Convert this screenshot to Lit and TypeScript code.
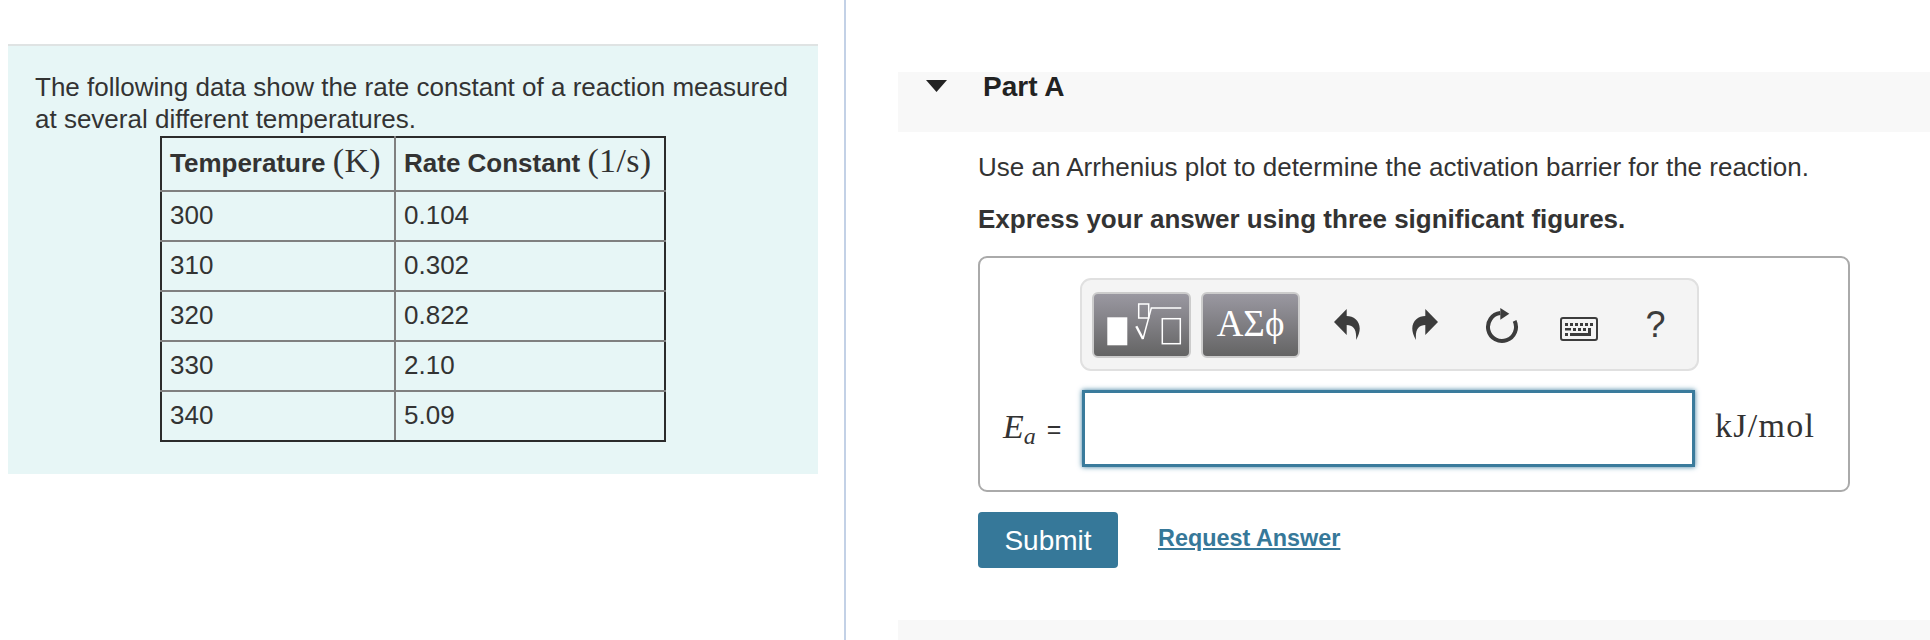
import { LitElement, css, html, svg } from "lit";
import { customElement } from "lit/decorators.js";

const rows = [
  ["300", "0.104"],
  ["310", "0.302"],
  ["320", "0.822"],
  ["330", "2.10"],
  ["340", "5.09"],
];

const keyCells = [
  [5, 6], [10, 6], [15, 6], [20, 6], [25, 6], [30, 6],
  [13, 11], [18, 11], [23, 11],
  [5, 16],
];

@customElement("app-root")
export class AppRoot extends LitElement {
  static styles = css`
    :host {
      display: flex;
      width: 1930px;
      height: 640px;
      overflow: hidden;
      background: #fff;
      color: #333;
      font-family: "Liberation Sans", Arial, sans-serif;
    }

    .left {
      width: 846px;
      flex: none;
      box-sizing: border-box;
      padding: 44px 0 0 8px;
      border-right: 2px solid #c3d1e6;
    }

    .panel {
      width: 810px;
      height: 430px;
      box-sizing: border-box;
      padding: 25px 27px 0;
      background: #e7f6f6;
      border-top: 2px solid #dfe3e3;
      font-size: 26px;
      line-height: 32px;
    }

    table {
      border-collapse: collapse;
      margin: 1px 0 0 125px;
      width: 506px;
      table-layout: fixed;
    }

    th,
    td {
      box-sizing: border-box;
      border: 2px solid #808080;
      padding: 0 0 2px 8px;
      text-align: left;
      height: 50px;
      line-height: 32px;
    }

    th {
      height: 54px;
      padding-bottom: 4px;
      white-space: nowrap;
      border-top-color: #2b2b2b;
    }

    th:first-child,
    td:first-child {
      width: 234px;
      border-left-color: #2b2b2b;
    }

    th:last-child,
    td:last-child {
      border-right-color: #2b2b2b;
    }

    tr:last-child td {
      border-bottom-color: #2b2b2b;
    }

    .math {
      font-family: "Liberation Serif", serif;
      font-weight: normal;
      font-size: 34px;
      letter-spacing: 0.3px;
    }

    .right {
      flex: 1;
      padding: 72px 0 0 52px;
      min-width: 0;
    }

    .part-bar {
      display: flex;
      height: 60px;
      box-sizing: border-box;
      padding-left: 28px;
      background: #f8f8f8;
      font-size: 28px;
      font-weight: bold;
      line-height: 30px;
      color: #222;
    }

    .caret {
      width: 21px;
      height: 12px;
      margin: 8px 36px 0 0;
      flex: none;
    }

    .content {
      margin-left: 80px;
      width: 872px;
    }

    p {
      margin: 0;
      font-size: 26px;
      line-height: 32px;
    }

    .intro {
      margin-top: 19px;
    }

    .hint {
      margin-top: 20px;
      font-weight: bold;
    }

    .box {
      margin-top: 21px;
      height: 236px;
      box-sizing: border-box;
      padding: 20px 0 0 100px;
      border: 2px solid #aaa;
      border-radius: 9px;
    }

    .toolbar {
      display: flex;
      align-items: center;
      width: 619px;
      height: 93px;
      box-sizing: border-box;
      padding: 0 0 0 10px;
      background: #f4f4f4;
      border: 2px solid #e0e0e0;
      border-radius: 11px;
    }

    .tool {
      width: 99px;
      height: 66px;
      flex: none;
      box-sizing: border-box;
      margin-right: 10px;
      padding-bottom: 2px;
      border: 2px solid #ccc;
      border-radius: 6px;
      background: linear-gradient(#9a98a1, #646464);
      display: flex;
      align-items: center;
      justify-content: center;
      color: #fff;
      font-family: "Liberation Serif", serif;
      font-size: 37px;
    }

    .tool svg {
      display: block;
      margin-bottom: -2px;
    }

    .slot {
      width: 77px;
      flex: none;
      display: flex;
      align-items: center;
      justify-content: center;
      color: #3c3c3c;
    }

    .tool + .slot {
      margin-left: -1px;
    }

    .keys {
      padding-top: 8px;
    }

    .help {
      font-size: 36px;
      line-height: 36px;
    }

    .answer {
      display: flex;
      align-items: center;
      margin: 19px 0 0 -100px;
      height: 77px;
    }

    .label {
      width: 102px;
      flex: none;
      box-sizing: border-box;
      padding: 0 0 4px 23px;
      font-family: "Liberation Serif", serif;
      white-space: nowrap;
      font-size: 34px;
    }

    .label i sub {
      font-size: 24px;
      line-height: 0;
      vertical-align: -6px;
    }

    .label .eq {
      font-family: "Liberation Sans", sans-serif;
      font-size: 25px;
      margin-left: 11px;
    }

    .input {
      width: 613px;
      height: 77px;
      flex: none;
      box-sizing: border-box;
      background: #fff;
      border: 3px solid #3a7b9c;
      box-shadow: 0 0 5px #3a7b9c;
    }

    .unit {
      margin-left: 20px;
      padding-bottom: 6px;
      font-family: "Liberation Serif", serif;
      font-size: 34px;
      letter-spacing: 1.3px;
    }

    .actions {
      display: flex;
      align-items: center;
      margin-top: 20px;
    }

    .submit {
      width: 140px;
      height: 56px;
      padding: 2px 0 0;
      border: none;
      border-radius: 4px;
      background: #367899;
      color: #fff;
      font: 28px "Liberation Sans", sans-serif;
    }

    .request {
      margin: 0 0 4px 40px;
      color: #367899;
      font-weight: bold;
      font-size: 23.4px;
      text-decoration: underline;
    }

    .band {
      height: 40px;
      margin-top: 52px;
      background: #f8f8f8;
    }
  `;

  private renderKeyboard() {
    return html`<svg width="38" height="24" viewBox="0 0 38 24">
      <rect x="1" y="1" width="36" height="22" rx="2" fill="none" stroke="currentColor" stroke-width="2" />
      ${keyCells.map(([x, y]) => svg`<rect x=${x} y=${y} width="3" height="3" fill="currentColor" />`)}
      <rect x="5" y="11" width="6" height="2.5" fill="currentColor" />
      <rect x="28" y="11" width="3" height="8" fill="currentColor" />
      <rect x="10" y="16" width="21" height="3" fill="currentColor" />
    </svg>`;
  }

  protected override render() {
    return html`
      <div class="left">
        <div class="panel">
          The following data show the rate constant of a reaction measured at several different temperatures.
          <table>
            <tr>
              <th>Temperature <span class="math">(K)</span></th>
              <th>Rate Constant <span class="math">(1/s)</span></th>
            </tr>
            ${rows.map(
              ([temp, rate]) => html`<tr>
                <td>${temp}</td>
                <td>${rate}</td>
              </tr>`,
            )}
          </table>
        </div>
      </div>
      <div class="right">
        <div class="part-bar">
          <svg class="caret" viewBox="0 0 21 12"><path d="M0 0H21L10.5 12Z" fill="#222" /></svg>
          Part A
        </div>
        <div class="content">
          <p class="intro">Use an Arrhenius plot to determine the activation barrier for the reaction.</p>
          <p class="hint">Express your answer using three significant figures.</p>
          <div class="box">
            <div class="toolbar">
              <div class="tool">
                <svg width="95" height="62" viewBox="2 2 95 62">
                  <rect x="15.3" y="25.3" width="20" height="28" fill="#fff" />
                  <g fill="none" stroke="#fff" stroke-width="1.5">
                    <rect x="46.7" y="12" width="10" height="14" />
                    <path d="M44.3 34.3L51 47" stroke-width="2.4" />
                    <path d="M51 47L59.3 16H89.3" />
                    <rect x="70.3" y="26.7" width="18" height="25" />
                  </g>
                </svg>
              </div>
              <div class="tool">ΑΣϕ</div>
              <div class="slot">
                <svg width="27" height="31" viewBox="0 0 27 31">
                  <path d="M0 13L12.7 0V7C22 7 31 16 22 31C23 20 19 16 12.7 16V26Z" fill="currentColor" />
                </svg>
              </div>
              <div class="slot">
                <svg width="27" height="31" viewBox="0 0 27 31">
                  <path d="M27 13L14.3 0V7C5 7 -4 16 5 31C4 20 8 16 14.3 16V26Z" fill="currentColor" />
                </svg>
              </div>
              <div class="slot">
                <svg width="34" height="38" viewBox="0 0 34 38">
                  <path d="M29.6 14.9A14 14 0 1 1 15.3 7.1" fill="none" stroke="currentColor" stroke-width="4" />
                  <path d="M15.3 2L24.3 7.7L15.3 13.7Z" fill="currentColor" />
                </svg>
              </div>
              <div class="slot keys">${this.renderKeyboard()}</div>
              <div class="slot help">?</div>
            </div>
            <div class="answer">
              <div class="label"><i>E<sub>a</sub></i><span class="eq">=</span></div>
              <div class="input"></div>
              <div class="unit">kJ/mol</div>
            </div>
          </div>
          <div class="actions">
            <button class="submit">Submit</button>
            <a class="request">Request Answer</a>
          </div>
        </div>
        <div class="band"></div>
      </div>
    `;
  }
}
